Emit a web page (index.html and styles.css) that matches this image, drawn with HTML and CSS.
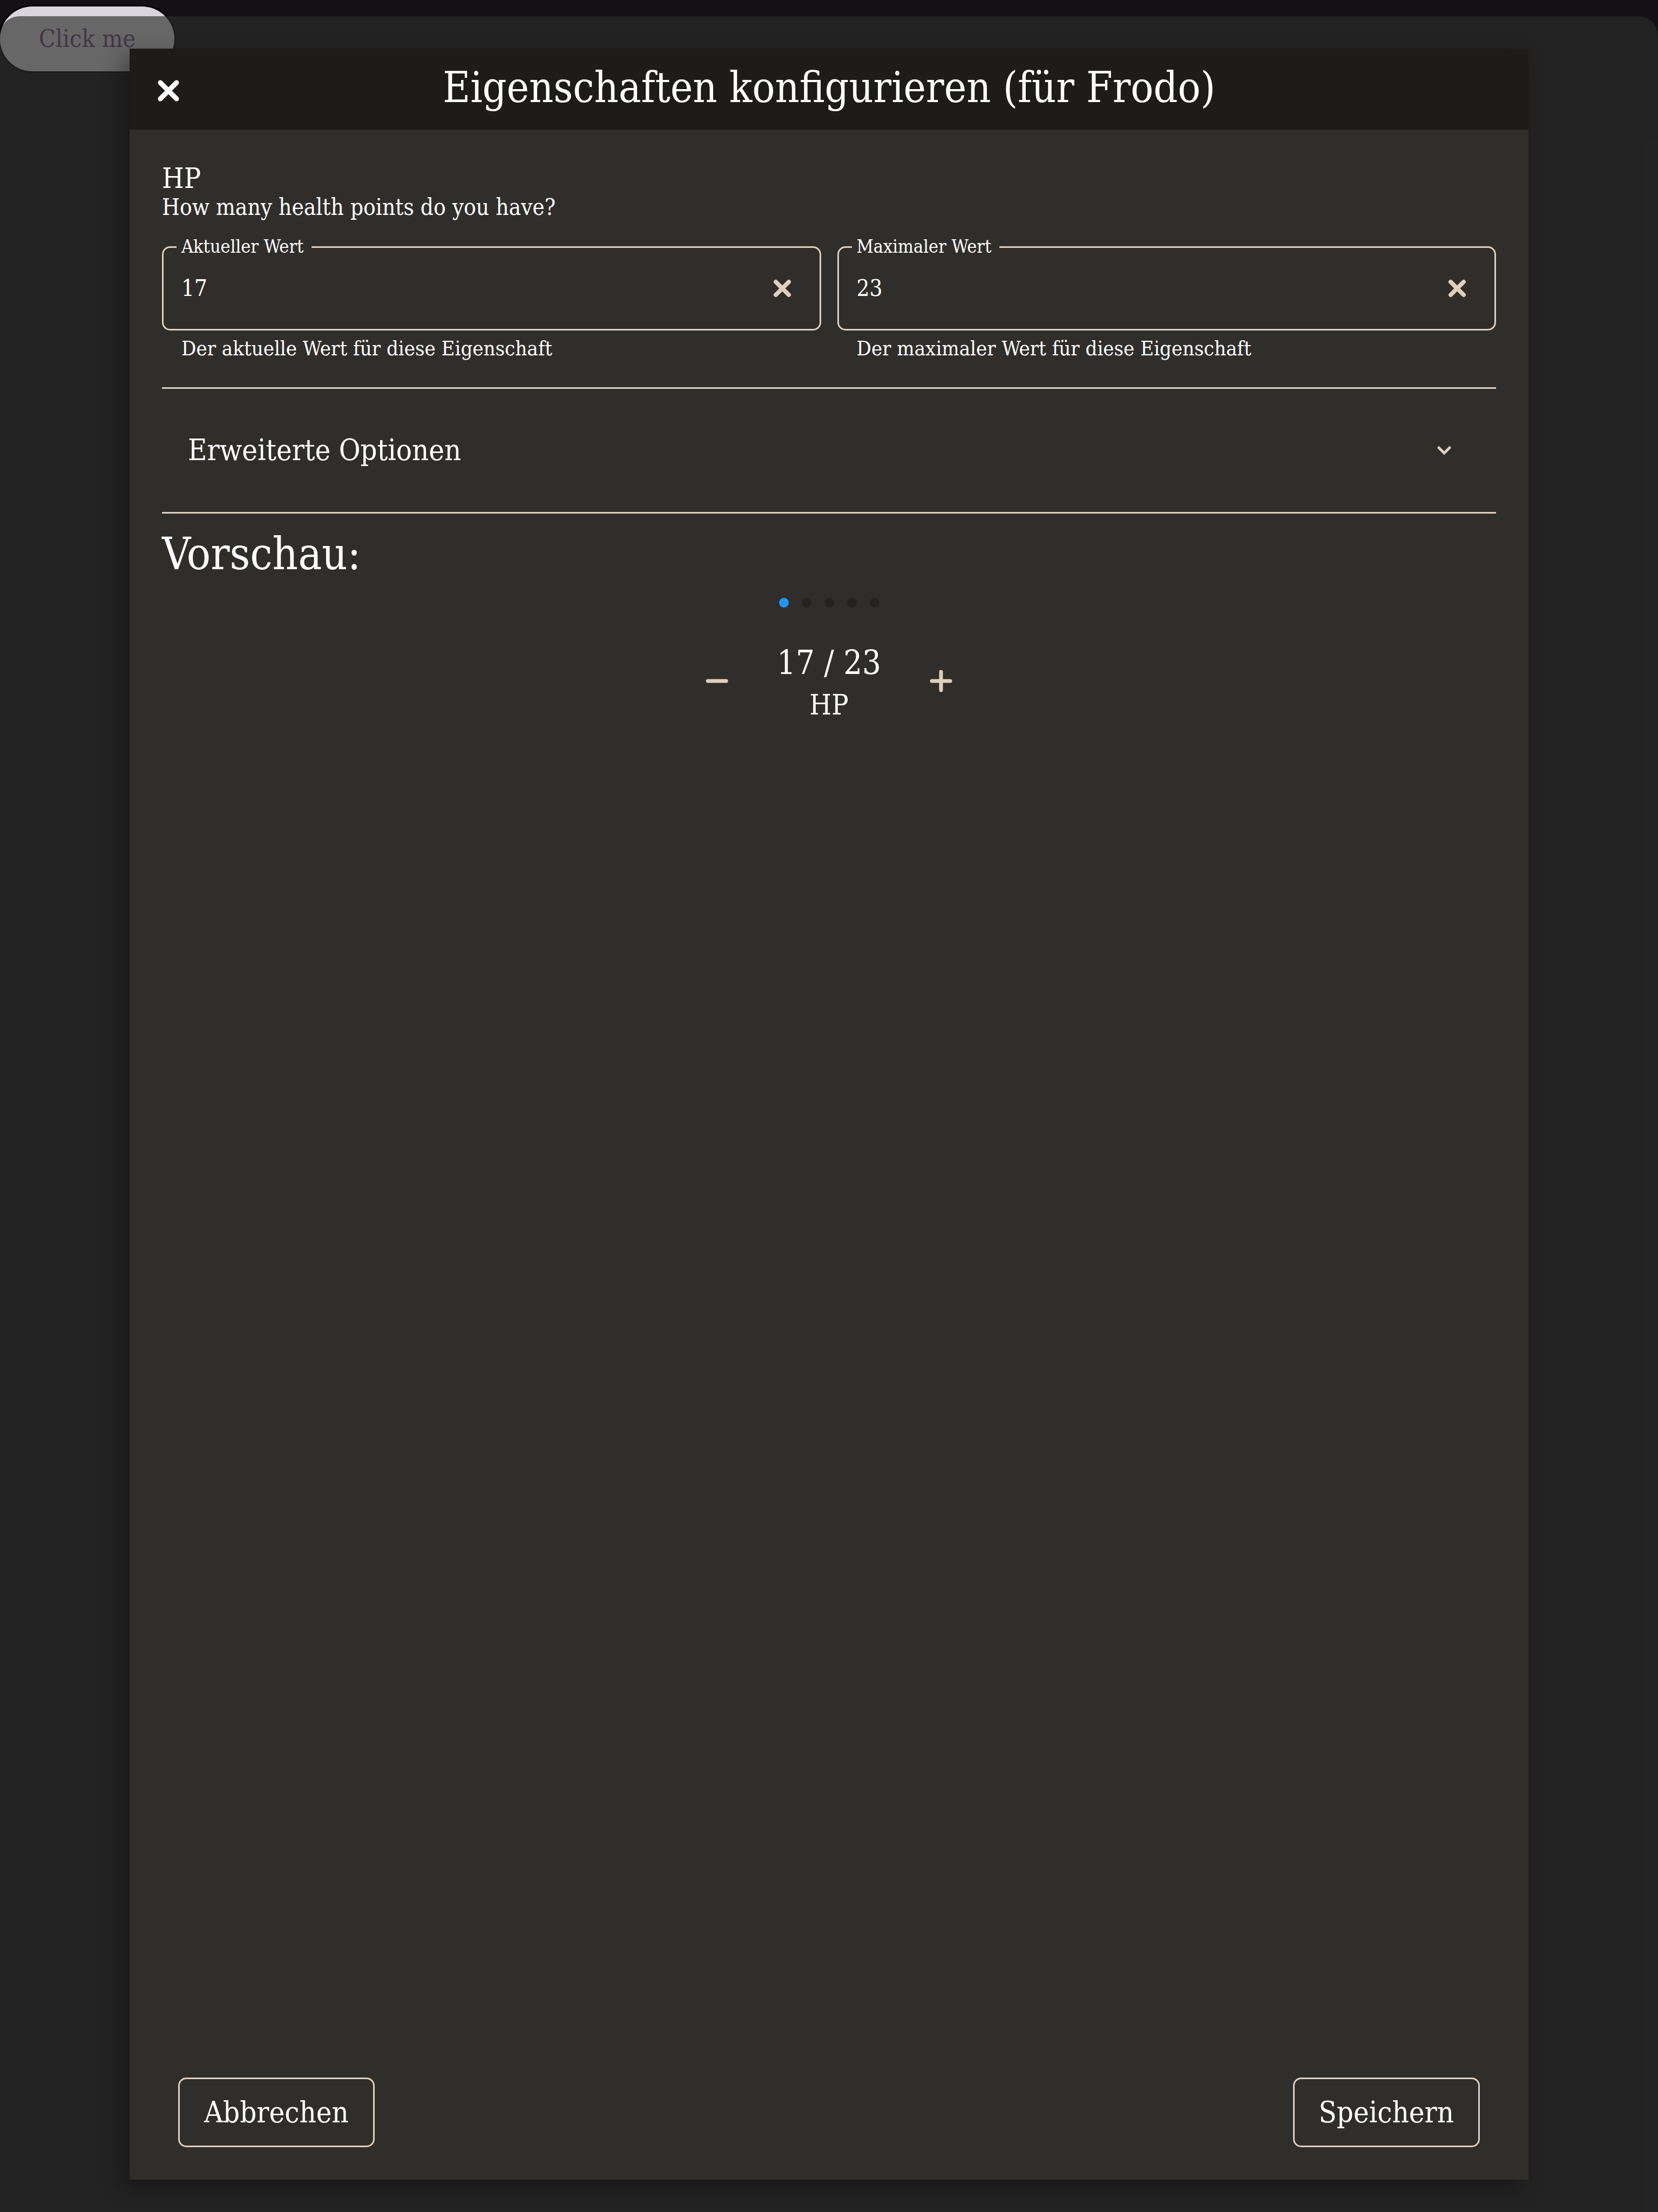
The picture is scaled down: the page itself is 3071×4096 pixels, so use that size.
FILE: index.html
```html
<!DOCTYPE html>
<html lang="de">
<head>
<meta charset="utf-8">
<title>Eigenschaften konfigurieren</title>
<link rel="stylesheet" href="styles.css">
</head>
<body>
<button class="launch" type="button">Click me</button>
<div class="backdrop">
  <section class="modal" role="dialog" aria-modal="true" aria-labelledby="modal-title">
    <header class="modal-header">
      <button class="icon-button close" type="button" aria-label="Schließen">
        <svg class="icon" viewBox="0 0 48 48"><path d="M9 9 39 39M39 9 9 39"/></svg>
      </button>
      <h1 class="modal-title" id="modal-title">Eigenschaften konfigurieren (für Frodo)</h1>
    </header>
    <main class="modal-body">
      <h2 class="attribute-name">HP</h2>
      <p class="attribute-info">How many health points do you have?</p>
      <div class="fields">
        <div class="field">
          <div class="field-box">
            <label class="field-label" for="current">Aktueller Wert</label>
            <input class="field-input" id="current" type="text" inputmode="numeric" value="17">
            <button class="icon-button clear" type="button" aria-label="Aktuellen Wert löschen">
              <svg class="icon" viewBox="0 0 48 48"><path d="M12 12 36 36M36 12 12 36"/></svg>
            </button>
          </div>
          <p class="field-hint">Der aktuelle Wert für diese Eigenschaft</p>
        </div>
        <div class="field">
          <div class="field-box">
            <label class="field-label" for="maximum">Maximaler Wert</label>
            <input class="field-input" id="maximum" type="text" inputmode="numeric" value="23">
            <button class="icon-button clear" type="button" aria-label="Maximalen Wert löschen">
              <svg class="icon" viewBox="0 0 48 48"><path d="M12 12 36 36M36 12 12 36"/></svg>
            </button>
          </div>
          <p class="field-hint">Der maximaler Wert für diese Eigenschaft</p>
        </div>
      </div>
      <button class="advanced" type="button" aria-expanded="false">
        <span>Erweiterte Optionen</span>
        <svg class="icon chevron" viewBox="0 0 48 48"><path d="M14 19 24 29 34 19"/></svg>
      </button>
      <h2 class="preview-title">Vorschau:</h2>
      <div class="preview">
        <div class="dots">
          <span class="dot dot-active"></span>
          <span class="dot"></span>
          <span class="dot"></span>
          <span class="dot"></span>
          <span class="dot"></span>
        </div>
        <div class="counter">
          <button class="icon-button step" type="button" aria-label="Weniger">
            <svg class="icon" viewBox="0 0 48 48"><path d="M7 24H41"/></svg>
          </button>
          <div class="counter-text">
            <span class="counter-value">17 / 23</span>
            <span class="counter-name">HP</span>
          </div>
          <button class="icon-button step" type="button" aria-label="Mehr">
            <svg class="icon" viewBox="0 0 48 48"><path d="M7 24H41M24 7V41"/></svg>
          </button>
        </div>
      </div>
    </main>
    <footer class="modal-footer">
      <button class="action" type="button">Abbrechen</button>
      <button class="action" type="button">Speichern</button>
    </footer>
  </section>
</div>
</body>
</html>
```
FILE: styles.css
```css
:root {
  --sand: #dfcfbc;
  --panel: #302e2b;
}

* {
  box-sizing: border-box;
}

body {
  position: relative;
  min-height: 100vh;
  margin: 0;
  padding-top: 12px;
  background: #131016;
  color: #fff;
  font-family: "DejaVu Serif Condensed", "DejaVu Serif", serif;
}

h1, h2, p {
  margin: 0;
  font-weight: 400;
}

button {
  margin: 0;
  padding: 0;
  border: 0;
  background: none;
  color: inherit;
  font-family: inherit;
}

.launch {
  display: block;
  padding: 0 72px;
  border-radius: 60px;
  background: #dad5dd;
  box-shadow: 0 0 0 3px #000;
  color: #61497e;
  font-size: 45px;
  line-height: 120px;
}

/* Dimmed page area that holds the dialog */
.backdrop {
  position: absolute;
  inset: 30px 0 0;
  display: flex;
  padding: 60px 240px;
  border-radius: 36px 36px 0 0;
  background: rgba(45, 46, 43, 0.66);
}

.modal {
  flex: 1;
  display: flex;
  flex-direction: column;
  background: var(--panel);
  box-shadow: -14px 14px 36px rgba(0, 0, 0, 0.33);
}

.modal-header {
  display: grid;
  grid-template-columns: 48px 1fr 48px;
  align-items: center;
  padding: 0 48px 6px;
  background: #1d1c1a;
  line-height: 144px;
}

.modal-title {
  font-size: 78px;
  text-align: center;
}

.icon-button {
  display: flex;
  color: var(--sand);
}

.icon {
  width: 48px;
  height: 48px;
  fill: none;
  stroke: currentColor;
  stroke-width: 7;
  stroke-linecap: round;
}

.close {
  padding-top: 12px;
  color: #fff;
}

.close .icon {
  stroke-width: 9;
}

.modal-body {
  flex: 1;
  padding: 60px;
}

.attribute-name {
  font-size: 52px;
  line-height: 60px;
}

.attribute-info {
  font-size: 42px;
  line-height: 48px;
}

.fields {
  display: grid;
  grid-template-columns: 1fr 1fr;
  gap: 30px;
  padding: 48px 0 42px;
  border-bottom: 3px solid var(--sand);
}

.field-box {
  position: relative;
  display: flex;
  align-items: center;
  height: 156px;
  padding: 0 45px 0 33px;
  border: 3px solid var(--sand);
  border-radius: 15px;
}

/* The label interrupts the top border of its box */
.field-label {
  position: absolute;
  top: -27px;
  left: 24px;
  padding: 0 15px 0 9px;
  background: var(--panel);
  font-size: 34px;
  line-height: 48px;
}

.field-input {
  flex: 1;
  min-width: 0;
  padding: 0;
  border: 0;
  outline: 0;
  background: none;
  color: inherit;
  font-family: inherit;
  font-size: 42px;
  line-height: 60px;
}

.clear .icon {
  stroke-width: 8;
}

.field-hint {
  padding: 3px 36px 0;
  font-size: 38px;
  line-height: 60px;
}

.advanced {
  display: flex;
  justify-content: space-between;
  align-items: center;
  width: 100%;
  height: 231px;
  padding: 0 72px 0 48px;
  border-bottom: 3px solid var(--sand);
  font-size: 54px;
  line-height: 72px;
}

.chevron {
  stroke: var(--sand);
  stroke-width: 5;
}

.preview-title {
  margin-top: 18px;
  font-size: 82px;
  line-height: 114px;
}

.preview {
  display: flex;
  flex-direction: column;
  align-items: center;
  gap: 53px;
  padding-top: 24px;
}

.dots {
  display: flex;
  gap: 24px;
}

.dot {
  width: 18px;
  height: 18px;
  border-radius: 50%;
  background: #252321;
}

.dot-active {
  background: #2196f3;
}

.counter {
  display: flex;
  align-items: center;
  gap: 87px;
}

.counter-text {
  display: flex;
  flex-direction: column;
  align-items: center;
  padding-top: 10px;
  line-height: 78px;
}

.counter-value {
  font-size: 61px;
}

.counter-name {
  font-size: 52px;
}

.modal-footer {
  display: flex;
  justify-content: space-between;
  padding: 60px 90px;
}

.action {
  padding: 0 45px;
  border: 3px solid var(--sand);
  border-radius: 15px;
  font-size: 54px;
  line-height: 123px;
}
```
